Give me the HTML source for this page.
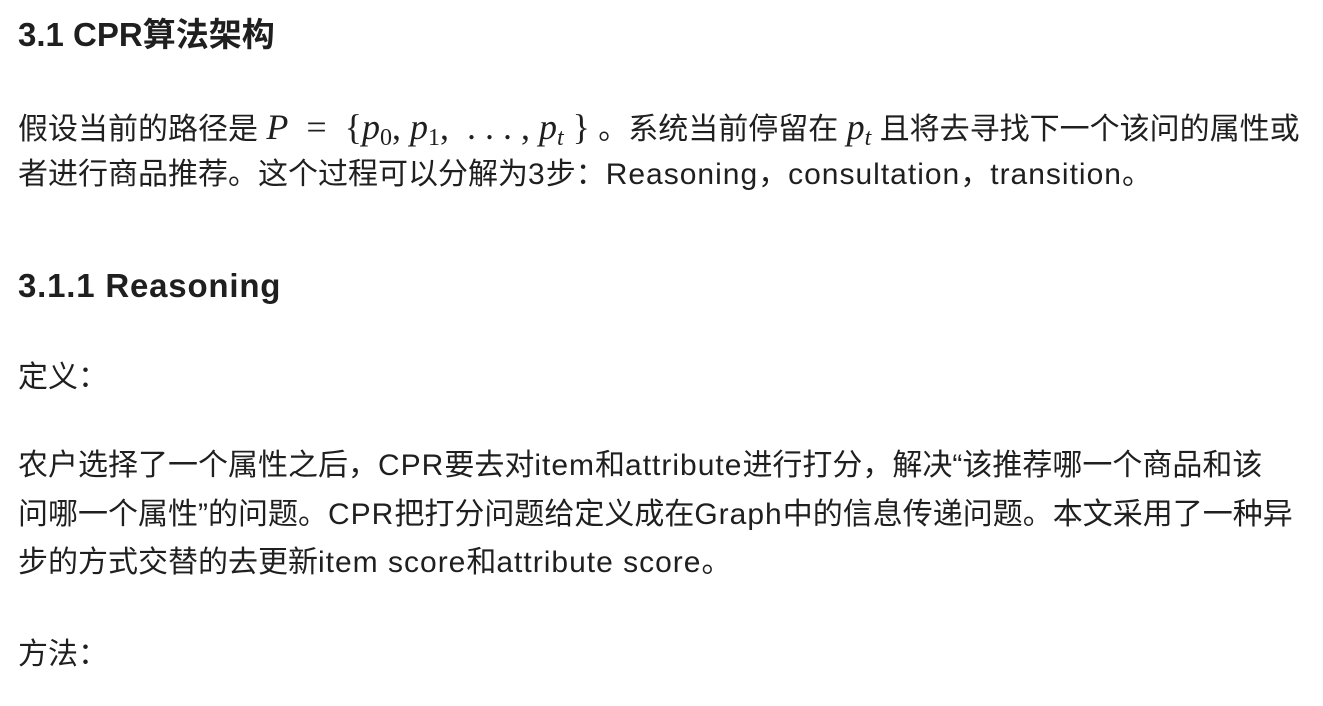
<!DOCTYPE html>
<html><head><meta charset="utf-8"><style>
html,body{margin:0;padding:0;background:#fff;width:1323px;height:706px;overflow:hidden}
body{font-family:"Liberation Sans","Noto Sans CJK SC",sans-serif;color:#1f1f1f;position:relative}
.l{position:absolute;left:18px;white-space:nowrap;font-size:30px;line-height:48px;height:48px}
.e{letter-spacing:1px}
.h{font-weight:bold;font-size:33px}
.m{font-family:"Liberation Serif",serif;font-style:italic;font-size:36px}
.r{font-family:"Liberation Serif",serif;font-style:normal;font-size:36px}
sub{font-family:"Liberation Serif",serif;font-size:24px;vertical-align:-6px;line-height:0}
</style></head><body>
<div class="l h" style="top:11px">3.1 CPR算法架构</div>
<div class="l" style="top:103px">假设当前的路径是 <span class="m">P</span><span class="r">&nbsp;&nbsp;=&nbsp;&nbsp;{</span><span class="m">p</span><sub>0</sub><span class="r">,&nbsp;</span><span class="m">p</span><sub>1</sub><span class="r">,&nbsp;&nbsp;.&nbsp;.&nbsp;.&nbsp;,&nbsp;</span><span class="m">p<sub style="font-style:italic">t</sub></span><span class="r">&nbsp;}</span> 。系统当前停留在 <span class="m">p<sub style="font-style:italic">t</sub></span> 且将去寻找下一个该问的属性或</div>
<div class="l" style="top:151px">者进行商品推荐。这个过程可以分解为<span class="e">3</span>步：<span class="e">Reasoning</span>，<span class="e">consultation</span>，<span class="e">transition</span>。</div>
<div class="l h" style="top:262px;letter-spacing:0.8px">3.1.1 Reasoning</div>
<div class="l" style="top:354px">定义：</div>
<div class="l" style="top:442px">农户选择了一个属性之后，<span class="e">CPR</span>要去对<span class="e">item</span>和<span class="e">attribute</span>进行打分，解决“该推荐哪一个商品和该</div>
<div class="l" style="top:491px">问哪一个属性”的问题。<span class="e">CPR</span>把打分问题给定义成在<span class="e">Graph</span>中的信息传递问题。本文采用了一种异</div>
<div class="l" style="top:539px">步的方式交替的去更新<span class="e">item score</span>和<span class="e">attribute score</span>。</div>
<div class="l" style="top:631px">方法：</div>
</body></html>
